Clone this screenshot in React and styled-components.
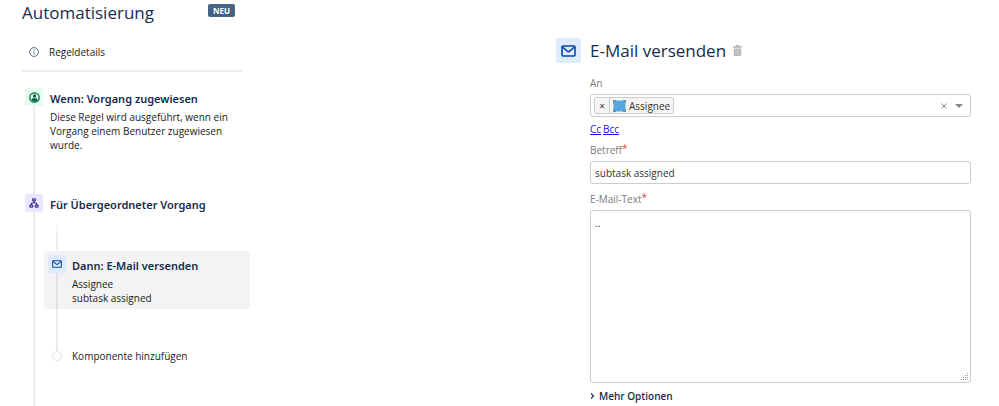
import React, { useState } from 'react';
import styled, { createGlobalStyle } from 'styled-components';

const GlobalStyle = createGlobalStyle`
  * {
    box-sizing: border-box;
  }
  body {
    margin: 0;
    background-color: #fff;
    color: #222;
    font-family: "Open Sans", "Noto Sans", sans-serif;
    font-size: 10px;
    line-height: 14px;
  }
  button, input, textarea {
    font: inherit;
    color: inherit;
  }
  button {
    padding: 0;
    border: 0;
    background: none;
    cursor: pointer;
  }
`

const Page = styled.div`
  display: grid;
  grid-template-columns: 534fr 415fr;
  min-height: 100vh;
  padding: 0 28px 0 22px;
`

const Sidebar = styled.aside`
  display: flex;
  flex-direction: column;
  width: 228px;
`

const SidebarTop = styled.header`
  display: flex;
  align-items: flex-start;
  justify-content: space-between;
  height: 38px;
  padding-right: 15px;
`

const Title = styled.h1`
  margin: 0;
  color: #172b4d;
  font-size: 17px;
  font-weight: 400;
  line-height: 25px;
`

const Badge = styled.span`
  width: 27px;
  margin-top: 4px;
  border-radius: 2px;
  background-color: #456287;
  color: #fff;
  font-size: 8px;
  font-weight: 700;
  line-height: 13px;
  text-align: center;
`

const DetailsLink = styled.button`
  display: flex;
  align-items: center;
  gap: 10px;
  width: 220px;
  height: 34px;
  padding: 0 0 4px 7px;
  border-bottom: 2px solid #ebecf0;
`

const Steps = styled.ol`
  display: flex;
  flex: 1;
  flex-direction: column;
  margin: 16px 0 0;
  padding: 0 0 0 3px;
  list-style: none;
`

const Step = styled.li`
  display: flex;
  flex-grow: ${props => props.$grow ? 1 : 0};
  min-height: 106px;
`

const Rail = styled.div`
  display: flex;
  flex-direction: column;
  align-items: center;
  flex: none;
  width: 18px;
`

const RailLine = styled.div`
  flex: 1;
  width: 2px;
  background-color: ${props => props.$dark ? '#e2e2e5' : '#ebecf0'};
`

const tones = {
  green: ['#e3fcef', '#006644'],
  purple: ['#eae6ff', '#403294'],
  blue: ['#deebff', '#0747a6'],
}

const Tile = styled.span`
  display: flex;
  align-items: center;
  justify-content: center;
  flex: none;
  width: ${props => props.$large ? 25 : 18}px;
  height: ${props => props.$large ? 25 : 18}px;
  border-radius: 2px;
  background-color: ${props => tones[props.$tone][0]};
  color: ${props => tones[props.$tone][1]};
`

const StepBody = styled.div`
  flex: 1;
  margin-left: 1px;
`

const StepText = styled.div`
  padding: 2px 14px 0 6px;
`

const StepTitle = styled.h2`
  margin: 0 0 2px;
  color: #172b4d;
  font-family: "Noto Sans", sans-serif;
  font-size: 11px;
  font-weight: 600;
  line-height: 18px;
`

const StepInfo = styled.p`
  margin: 0;
`

const Branch = styled.div`
  display: flex;
  flex-direction: column;
  padding-top: 6px;
`

const BranchGap = styled.div`
  width: 2px;
  height: ${props => props.$fade ? 29 : 42}px;
  margin-left: 12px;
  background: ${props => props.$fade ? 'linear-gradient(#fff, #ebecf0 50%)' : '#ebecf0'};
`

const ActionCard = styled.button`
  display: flex;
  height: 58px;
  padding: 0 4px;
  border-radius: 3px;
  background-color: #f3f3f3;
  text-align: left;

  ${Rail} {
    align-self: stretch;
  }
  ${Tile} {
    margin-top: 4px;
  }
`

const ActionText = styled.span`
  display: flex;
  flex-direction: column;
  padding: 6px 0 0 6px;
`

const ActionTitle = styled(StepTitle)`
  margin-bottom: 2px;
`

const AddComponent = styled.button`
  display: flex;
  align-items: center;
  gap: 10px;
  height: 10px;
  padding-left: 8px;
`

const Circle = styled.span`
  width: 10px;
  height: 10px;
  border: 1px solid #dfe1e6;
  border-radius: 50%;
`

const Editor = styled.main`
  display: flex;
  gap: 9px;
  padding-top: 38px;
`

const Form = styled.form`
  display: flex;
  flex: 1;
  flex-direction: column;
`

const FormHead = styled.div`
  display: flex;
  align-items: center;
  gap: 7px;
  height: 25px;
  margin-bottom: 13px;
`

const Label = styled.label`
  height: 18px;
  color: #7a7a7a;
`

const Required = styled.span`
  color: #e5493a;
  line-height: 10px;
  vertical-align: 2px;
`

const boxStyle = `
  border: 1px solid #ccc;
  border-radius: 3px;
  background-color: #fff;
  color: #333;
`

const Select = styled.div`
  ${boxStyle}
  display: flex;
  align-items: center;
  gap: 8px;
  height: 23px;
  padding: 0 7px 0 3px;
`

const Chip = styled.span`
  display: flex;
  align-items: center;
  height: 17px;
  border: 1px solid #ccc;
  border-radius: 2px;
  background-color: #f5f5f5;
`

const ChipRemove = styled.button`
  align-self: stretch;
  width: 15px;
  border-right: 1px solid #ccc;
`

const ChipLabel = styled.span`
  display: flex;
  align-items: center;
  gap: 3px;
  padding: 0 3px;
`

const SelectInput = styled.input`
  flex: 1;
  min-width: 0;
  border: 0;
  outline: 0;
`

const IconButton = styled.button`
  display: flex;
  align-items: center;
  color: #888;
`

const Copies = styled.div`
  display: flex;
  gap: 2px;
  padding: 5px 0 7px;
`

const CopyLink = styled.a`
  color: #1a0dee;
`

const TextInput = styled.input`
  ${boxStyle}
  height: 23px;
  margin-bottom: 8px;
  padding: 0 4px;
`

const dot = (x, y) => `linear-gradient(#999, #999) right ${x}px bottom ${y}px / 1px 1px no-repeat`

const TextArea = styled.textarea`
  ${boxStyle}
  height: 173px;
  padding: 5px 4px;
  resize: vertical;

  &::-webkit-resizer {
    background: ${[[2, 2], [4, 2], [6, 2], [8, 2], [2, 4], [4, 4], [6, 4], [2, 6], [4, 6], [2, 8]].map(p => dot(...p)).join(', ')};
  }
`

const MoreOptions = styled.button`
  display: flex;
  align-items: center;
  gap: 4px;
  margin-top: 6px;
  color: #172b4d;
  font-weight: 600;
`

const InfoIcon = () => (
  <svg width="10" height="10" viewBox="0 0 10 10" fill="none" stroke="#5e6c84">
    <circle cx="5" cy="5" r="4.4" />
    <path d="M5 4.4v3M5 2.4v1.1" />
  </svg>
)

const UserIcon = () => (
  <svg width="11" height="11" viewBox="0 0 11 11">
    <circle cx="5.5" cy="5.5" r="4.7" fill="none" stroke="currentColor" strokeWidth="1.2" />
    <circle cx="5.5" cy="4" r="1.7" fill="currentColor" />
    <path d="M2.8 8.6V7.4c0-.8.5-1.2 1.2-1.2h3c.7 0 1.2.4 1.2 1.2v1.2L5.5 10z" fill="currentColor" />
  </svg>
)

const BranchIcon = () => (
  <svg width="10" height="10" viewBox="0 0 10 10" fill="none" stroke="currentColor" strokeWidth="1.2">
    <rect x="3.6" y="0.9" width="2.8" height="2" rx="0.6" />
    <path d="M5 3v2M2.2 7V6q0-1 1-1h3.6q1 0 1 1v1" />
    <rect x="0.9" y="7.1" width="2.8" height="2" rx="0.6" />
    <rect x="6.3" y="7.1" width="2.8" height="2" rx="0.6" />
  </svg>
)

const MailIcon = ({ size }) => (
  <svg width={size} height={size * 0.8} viewBox="0 0 15 12" fill="none" stroke="currentColor" strokeWidth="1.6">
    <rect x="1" y="1" width="13" height="10" rx="1" />
    <path d="M1.5 2l4.8 4.1q1.2 1 2.4 0L13.5 2" />
  </svg>
)

const TrashIcon = () => (
  <svg width="9" height="11" viewBox="0 0 9 11" fill="#b8b8b8">
    <path d="M0 1.2h2.8V0h3.4v1.2H9v1.5H0zM.8 3.5h7.4V10q0 1-1 1H1.8q-1 0-1-1z" />
    <path d="M3 4.5v5M4.5 4.5v5M6 4.5v5" stroke="#d4d4d4" strokeWidth="0.6" />
  </svg>
)

const AvatarIcon = () => (
  <svg width="13" height="12" viewBox="0 0 13 12">
    <path d="M0.5 3V0.500H3M10 0.500h2.500V3M12.500 9v2.500H10M3 11.500H0.500V9" fill="none" stroke="#777" />
    <rect x="0.500" y="0.500" width="12" height="11" rx="2.500" fill="#55a9e0" />
  </svg>
)

const ClearIcon = () => (
  <svg width="6" height="6" viewBox="0 0 6 6" stroke="currentColor">
    <path d="M0.5 0.5l5 5M5.5 0.5l-5 5" />
  </svg>
)

const CaretIcon = () => (
  <svg width="8" height="4" viewBox="0 0 8 4" fill="currentColor">
    <path d="M0 0h8L4 4z" />
  </svg>
)

const ChevronIcon = () => (
  <svg width="5" height="6" viewBox="0 0 5 6" fill="none" stroke="currentColor" strokeWidth="1.1">
    <path d="M1 0.5L3.5 3 1 5.5" />
  </svg>
)

function App() {

  const [assigned, setAssigned] = useState(true);
  const [subject, setSubject] = useState('subtask assigned');
  const [text, setText] = useState('..');

  const clearAssigned = () => {
    setAssigned(false)
  }

  return (
    <Page>
      <GlobalStyle />
      <Sidebar>
        <SidebarTop>
          <Title>Automatisierung</Title>
          <Badge>NEU</Badge>
        </SidebarTop>
        <DetailsLink type="button"><InfoIcon />Regeldetails</DetailsLink>
        <Steps>
          <Step>
            <Rail>
              <Tile $tone="green"><UserIcon /></Tile>
              <RailLine />
            </Rail>
            <StepBody>
              <StepText>
                <StepTitle>Wenn: Vorgang zugewiesen</StepTitle>
                <StepInfo>Diese Regel wird ausgeführt, wenn ein Vorgang einem Benutzer zugewiesen wurde.</StepInfo>
              </StepText>
            </StepBody>
          </Step>
          <Step $grow>
            <Rail>
              <Tile $tone="purple"><BranchIcon /></Tile>
              <RailLine />
            </Rail>
            <StepBody>
              <StepText>
                <StepTitle>Für Übergeordneter Vorgang</StepTitle>
              </StepText>
              <Branch>
                <BranchGap $fade />
                <ActionCard type="button">
                  <Rail>
                    <Tile $tone="blue"><MailIcon size={10} /></Tile>
                    <RailLine $dark />
                  </Rail>
                  <ActionText>
                    <ActionTitle as="strong">Dann: E-Mail versenden</ActionTitle>
                    <span>Assignee</span>
                    <span>subtask assigned</span>
                  </ActionText>
                </ActionCard>
                <BranchGap />
                <AddComponent type="button"><Circle />Komponente hinzufügen</AddComponent>
              </Branch>
            </StepBody>
          </Step>
        </Steps>
      </Sidebar>
      <Editor>
        <Tile $tone="blue" $large><MailIcon size={15} /></Tile>
        <Form>
          <FormHead>
            <Title as="h2">E-Mail versenden</Title>
            <IconButton type="button" aria-label="Löschen"><TrashIcon /></IconButton>
          </FormHead>
          <Label htmlFor="to">An</Label>
          <Select>
            {assigned && (
              <Chip>
                <ChipRemove type="button" onClick={clearAssigned}>×</ChipRemove>
                <ChipLabel><AvatarIcon />Assignee</ChipLabel>
              </Chip>
            )}
            <SelectInput id="to" />
            <IconButton type="button" aria-label="Leeren" onClick={clearAssigned}><ClearIcon /></IconButton>
            <IconButton type="button" aria-label="Auswahl öffnen"><CaretIcon /></IconButton>
          </Select>
          <Copies>
            <CopyLink href="#cc">Cc</CopyLink>
            <CopyLink href="#bcc">Bcc</CopyLink>
          </Copies>
          <Label htmlFor="subject">Betreff<Required>*</Required></Label>
          <TextInput id="subject" value={subject} onChange={e => setSubject(e.target.value)} />
          <Label htmlFor="text">E-Mail-Text<Required>*</Required></Label>
          <TextArea id="text" value={text} onChange={e => setText(e.target.value)} />
          <MoreOptions type="button"><ChevronIcon />Mehr Optionen</MoreOptions>
        </Form>
      </Editor>
    </Page>
  );
}

export default App;
